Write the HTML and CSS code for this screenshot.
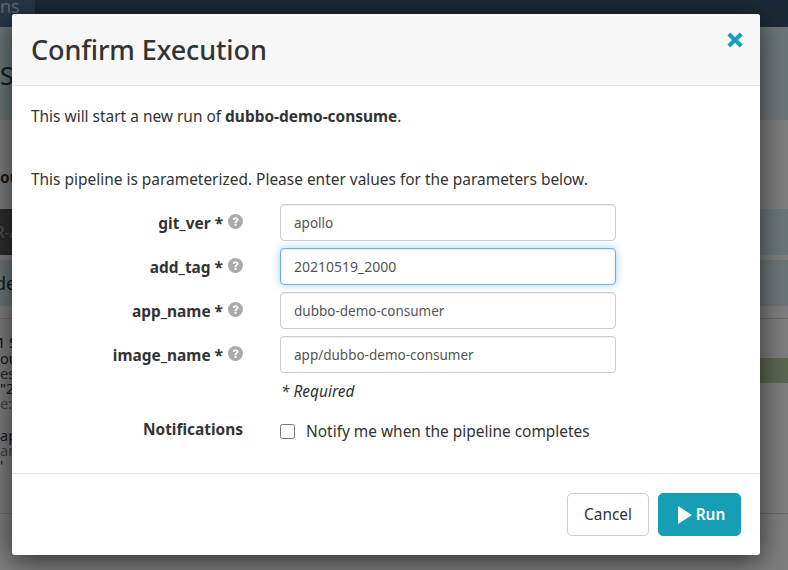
FILE: index.html
```html
<html>
  <head>
    <title>Confirm Execution</title>
    <link rel="stylesheet" href="styles.css">
  </head>
  <body>
    <div class="page">
      <div class="nav"><div class="tab">ns</div></div>
      <div class="head"><span class="head-title">S</span></div>
      <div class="info"><b>ou</b></div>
      <div class="bar"><div class="bar-dark">R-A</div></div>
      <div class="bar bar-second"><span class="bar-text">de</span></div>
      <div class="detail">
        <div class="log">
          <div class="log-title">1 S</div>
          <div class="log-dark">ou</div>
          <div>es</div>
          <div class="log-dark">"2</div>
          <div class="log-light">e:</div>
          <div class="log-dark log-gap">ap</div>
          <div class="log-light">am</div>
          <div class="log-dark">'</div>
        </div>
        <div class="side"><div class="side-green"></div></div>
      </div>
    </div>
    <div class="backdrop"></div>

    <div class="modal">
      <div class="modal-head">
        <h1>Confirm Execution</h1>
        <svg class="close" viewBox="0 0 16 16">
          <path d="M3.2 .6 L8 5.2 L12.8 .6 L15.6 3.4 L11 8 L15.6 12.6 L12.8 15.4 L8 10.8 L3.2 15.4 L.4 12.6 L5 8 L.4 3.4 Z"/>
        </svg>
      </div>
      <div class="modal-body">
        <p class="intro">This will start a new run of <b>dubbo-demo-consume</b>.</p>
        <p class="intro second">This pipeline is parameterized. Please enter values for the parameters below.</p>
        <div class="form">
          <label class="field-label">git_ver *
            <svg class="help" viewBox="0 0 16 16"><circle cx="8" cy="8" r="8"/><path class="help-mark" d="M5 6.2 C5.2 4.4 6.4 3.4 8.2 3.4 C10 3.4 11.2 4.5 11.2 5.9 C11.2 7.2 10.4 7.8 9.6 8.3 C9.2 8.6 9.1 8.8 9.1 9.5 L7 9.5 C7 8.3 7.3 7.7 8.2 7.1 C8.8 6.7 9.1 6.5 9.1 6 C9.1 5.5 8.7 5.2 8.1 5.2 C7.5 5.2 7.1 5.6 7 6.5 Z M7 10.4 H9.1 V12.5 H7 Z"/></svg>
          </label>
          <input class="text-input" type="text" value="apollo">
          <label class="field-label">add_tag *
            <svg class="help" viewBox="0 0 16 16"><circle cx="8" cy="8" r="8"/><path class="help-mark" d="M5 6.2 C5.2 4.4 6.4 3.4 8.2 3.4 C10 3.4 11.2 4.5 11.2 5.9 C11.2 7.2 10.4 7.8 9.6 8.3 C9.2 8.6 9.1 8.8 9.1 9.5 L7 9.5 C7 8.3 7.3 7.7 8.2 7.1 C8.8 6.7 9.1 6.5 9.1 6 C9.1 5.5 8.7 5.2 8.1 5.2 C7.5 5.2 7.1 5.6 7 6.5 Z M7 10.4 H9.1 V12.5 H7 Z"/></svg>
          </label>
          <input class="text-input is-focus" type="text" value="20210519_2000">
          <label class="field-label">app_name *
            <svg class="help" viewBox="0 0 16 16"><circle cx="8" cy="8" r="8"/><path class="help-mark" d="M5 6.2 C5.2 4.4 6.4 3.4 8.2 3.4 C10 3.4 11.2 4.5 11.2 5.9 C11.2 7.2 10.4 7.8 9.6 8.3 C9.2 8.6 9.1 8.8 9.1 9.5 L7 9.5 C7 8.3 7.3 7.7 8.2 7.1 C8.8 6.7 9.1 6.5 9.1 6 C9.1 5.5 8.7 5.2 8.1 5.2 C7.5 5.2 7.1 5.6 7 6.5 Z M7 10.4 H9.1 V12.5 H7 Z"/></svg>
          </label>
          <input class="text-input" type="text" value="dubbo-demo-consumer">
          <label class="field-label">image_name *
            <svg class="help" viewBox="0 0 16 16"><circle cx="8" cy="8" r="8"/><path class="help-mark" d="M5 6.2 C5.2 4.4 6.4 3.4 8.2 3.4 C10 3.4 11.2 4.5 11.2 5.9 C11.2 7.2 10.4 7.8 9.6 8.3 C9.2 8.6 9.1 8.8 9.1 9.5 L7 9.5 C7 8.3 7.3 7.7 8.2 7.1 C8.8 6.7 9.1 6.5 9.1 6 C9.1 5.5 8.7 5.2 8.1 5.2 C7.5 5.2 7.1 5.6 7 6.5 Z M7 10.4 H9.1 V12.5 H7 Z"/></svg>
          </label>
          <input class="text-input" type="text" value="app/dubbo-demo-consumer">
          <div></div>
          <em class="required">* Required</em>
          <label class="field-label notify-label">Notifications</label>
          <label class="notify"><input type="checkbox"> Notify me when the pipeline completes</label>
        </div>
      </div>
      <div class="modal-foot">
        <button class="btn">Cancel</button>
        <button class="btn btn-run"><svg class="play" viewBox="0 0 14 18"><path d="M0 0 L14 9 L0 18 Z"/></svg>Run</button>
      </div>
    </div>
  </body>
</html>
```

FILE: styles.css
```css
html, body {
  margin: 0;
  height: 100%;
  overflow: hidden;
}
body {
  font-family: "Noto Sans", "Open Sans", sans-serif;
  font-size: 15.45px;
  color: #333;
  background: #fff;
}

/* page behind the dialog */
.page {
  height: 570px;
  overflow: hidden;
  background: #fcfcfc;
}
.nav {
  height: 27px;
  background: #36556f;
}
.tab {
  width: 35px;
  height: 27px;
  box-sizing: border-box;
  padding-right: 18px;
  text-align: right;
  line-height: 12px;
  font-size: 18px;
  color: #c4d0da;
  background: #4a7193;
}
.head {
  height: 93px;
  box-sizing: border-box;
  padding-top: 3px;
  background: #d8ecf0;
}
.head-title {
  display: block;
  line-height: 90px;
  font-size: 25px;
  color: #2b3e50;
}
.info {
  height: 89px;
  box-sizing: border-box;
  padding-top: 47px;
  line-height: 20px;
}
.bar {
  height: 46px;
  margin-bottom: 5px;
  background: #d8ecf0;
}
.bar-dark {
  width: 100px;
  height: 46px;
  line-height: 46px;
  text-indent: -5px;
  color: #aaa;
  background: #5a5a5a;
}
.bar-second {
  margin-bottom: 12px;
  background: #d8ecf0;
}
.bar-text {
  display: block;
  line-height: 46px;
  font-size: 18px;
  text-indent: -5px;
}
.detail {
  display: flex;
  justify-content: space-between;
  height: 194px;
  border-top: 1px solid #d5d5d5;
  border-bottom: 1px solid #d5d5d5;
}
.log {
  padding-top: 16px;
  font-size: 14.5px;
  line-height: 15px;
  color: #555;
}
.log-title {
  margin-bottom: 1px;
  text-indent: -3px;
  color: #222;
}
.log-dark {
  color: #333;
}
.log-light {
  color: #888;
}
.log-gap {
  margin-top: 17px;
}
.side {
  width: 300px;
  padding-top: 39px;
}
.side-green {
  height: 25px;
  background: #b7cda1;
}
.backdrop {
  position: absolute;
  left: 0;
  top: 0;
  right: 0;
  bottom: 0;
  background: rgba(0, 0, 0, .5);
}

/* dialog */
.modal {
  position: absolute;
  left: 12px;
  top: 14px;
  width: 748px;
  border-radius: 3px;
  background: #fff;
  box-shadow: 0 5px 28px rgba(0, 0, 0, .65);
}
.modal-head {
  display: flex;
  justify-content: space-between;
  height: 71px;
  padding: 0 17px 0 20px;
  border-bottom: 1px solid #e5e5e5;
  border-radius: 3px 3px 0 0;
  background: #f7f7f7;
}
h1 {
  margin: 0 0 0 -1px;
  line-height: 71px;
  font-size: 27px;
  font-weight: 500;
  letter-spacing: -.1px;
}
.close {
  width: 16px;
  height: 16px;
  margin-top: 18px;
  fill: #169eb6;
}
.modal-body {
  height: 388px;
  box-sizing: border-box;
  padding: 18px 20px 0;
  border-bottom: 1px solid #e5e5e5;
}
.intro {
  margin: 0 0 39px -1px;
  line-height: 24px;
}
.second {
  margin-bottom: 13px;
}
.form {
  display: grid;
  grid-template-columns: 211px 336px;
  column-gap: 37px;
  row-gap: 7px;
}
.field-label {
  display: flex;
  justify-content: flex-end;
  align-items: center;
  gap: 5px;
  padding-top: 1px;
  font-weight: bold;
}
.help {
  width: 15px;
  height: 15px;
  margin-top: -4px;
  fill: #aaa;
}
.help-mark {
  fill: #fff;
}
.text-input {
  height: 37px;
  box-sizing: border-box;
  padding: 0 13px;
  border: 1px solid #ccc;
  border-radius: 4px;
  outline: none;
  font-family: inherit;
  font-size: 13.5px;
  color: #555;
  background: #fff;
  box-shadow: inset 0 1px 1px rgba(0, 0, 0, .075);
}
.is-focus {
  border-color: #66afe9;
  font-size: 14px;
  box-shadow: inset 0 1px 1px rgba(0, 0, 0, .075), 0 0 8px rgba(102, 175, 233, .6);
}
.required {
  margin-left: 1px;
  line-height: 22px;
}
.notify-label {
  margin-top: 8px;
  height: 24px;
  padding-top: 0;
  align-self: start;
}
.notify {
  display: flex;
  align-items: center;
  gap: 11px;
  height: 24px;
  margin-top: 10px;
}
.notify input {
  width: 15px;
  height: 15px;
  margin: 0;
}
.modal-foot {
  display: flex;
  justify-content: flex-end;
  gap: 9px;
  padding: 19px 19px 19px 0;
}
.btn {
  width: 82px;
  height: 43px;
  border: 1px solid #ccc;
  border-radius: 5px;
  font-family: inherit;
  font-size: 15.4px;
  color: #333;
  background: #fff;
}
.btn-run {
  display: flex;
  justify-content: center;
  align-items: center;
  gap: 4px;
  width: 83px;
  padding: 0 0 0 4px;
  border-color: #169eb6;
  font-weight: 600;
  color: #fff;
  background: #169eb6;
}
.play {
  width: 14px;
  height: 18px;
  fill: #fff;
}
```
